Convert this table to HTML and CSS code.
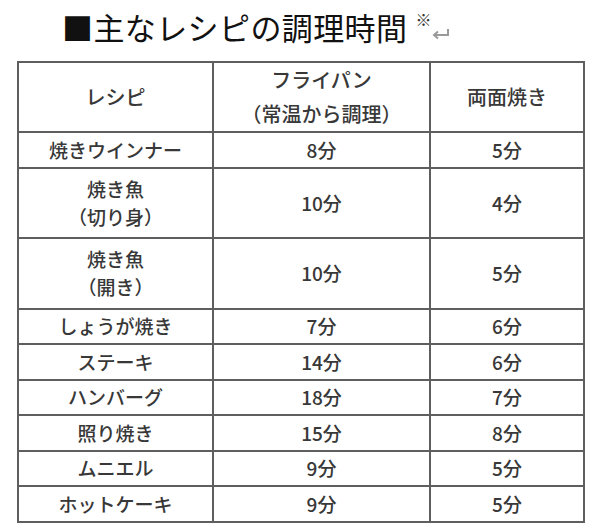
FILE: index.html
```html
<!DOCTYPE html>
<html lang="ja">
<head>
<meta charset="utf-8">
<link rel="stylesheet" href="styles.css">
</head>
<body>
<div class="page">
  <h1 class="title"><span class="title-text">■主なレシピの調理時間</span><span class="note">※</span><svg class="ret" width="18" height="12" viewBox="0 0 18 12"><path d="M16 1 V7 H3" fill="none" stroke="#9a9a9a" stroke-width="2"/><path d="M6 3.5 L2 7 L6 10.5" fill="none" stroke="#9a9a9a" stroke-width="2"/></svg></h1>
  <table class="times">
    <colgroup>
      <col class="c1"><col class="c2"><col class="c3">
    </colgroup>
    <tr class="head">
      <td>レシピ</td>
      <td><div class="l1">フライパン</div><div class="l2">（常温から調理）</div></td>
      <td>両面焼き</td>
    </tr>
    <tr class="one"><td>焼きウインナー</td><td>8分</td><td>5分</td></tr>
    <tr class="two"><td>焼き魚<br>（切り身）</td><td>10分</td><td>4分</td></tr>
    <tr class="two"><td>焼き魚<br>（開き）</td><td>10分</td><td>5分</td></tr>
    <tr class="one"><td>しょうが焼き</td><td>7分</td><td>6分</td></tr>
    <tr class="one"><td>ステーキ</td><td>14分</td><td>6分</td></tr>
    <tr class="one"><td>ハンバーグ</td><td>18分</td><td>7分</td></tr>
    <tr class="one"><td>照り焼き</td><td>15分</td><td>8分</td></tr>
    <tr class="one"><td>ムニエル</td><td>9分</td><td>5分</td></tr>
    <tr class="one"><td>ホットケーキ</td><td>9分</td><td>5分</td></tr>
  </table>
</div>
</body>
</html>
```
FILE: styles.css
```css
html, body {
  margin: 0;
  padding: 0;
  background: #ffffff;
}
.page {
  width: 600px;
  height: 532px;
  overflow: hidden;
  font-family: "Noto Sans CJK JP", "Noto Sans", sans-serif;
  color: #333;
}
.title {
  margin: 0;
  padding: 10px 0 0 62px;
  height: 51px;
  display: flex;
  align-items: flex-start;
  font-size: 31px;
  font-weight: 400;
  line-height: 34px;
  color: #111;
  letter-spacing: 0.4px;
}
.note {
  font-size: 16px;
  line-height: 16px;
  margin-left: 8px;
  margin-top: 1px;
  color: #333;
  letter-spacing: 0;
}
.ret {
  margin-top: 18px;
  margin-left: 1px;
}
.times {
  margin-left: 17px;
  border-collapse: collapse;
  table-layout: fixed;
  width: 566px;
  border: 2px solid #5e5e5e;
}
.c1 { width: 195px; }
.c2 { width: 217px; }
.c3 { width: 154px; }
.times td {
  border: 2px solid #5e5e5e;
  text-align: center;
  vertical-align: middle;
  padding: 0;
  font-size: 19px;
  font-weight: 500;
  line-height: 28px;
  color: #383838;
}
.head td {
  font-size: 20px;
}
.head { height: 70px; }
.head .l1 { line-height: 34px; }
.head .l2 { line-height: 34px; }
.one { height: 35.5px; }
.two { height: 70.5px; }
```
